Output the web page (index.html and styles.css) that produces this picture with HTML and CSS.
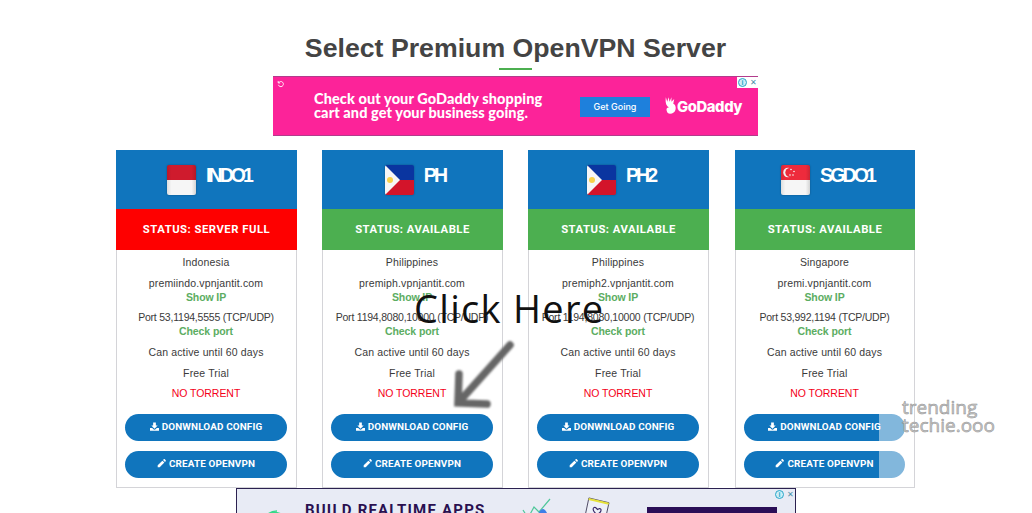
FILE: index.html
```html
<!DOCTYPE html>
<html lang="en">
<head>
<meta charset="utf-8">
<title>Select Premium OpenVPN Server</title>
<link rel="stylesheet" href="styles.css">
</head>
<body>
<svg class="defs" width="0" height="0" aria-hidden="true">
  <symbol id="i-down" viewBox="0 0 12 12"><path d="M4.2 0.5h3.6v4.2h2.4L6 9 1.800 4.700h2.400z"/><path d="M0.300 8h2.700l1.600 1.700c.8.800 2 .8 2.800 0L9 8h2.700c.2 0 .3.100.3.300v3.200c0 .2-.1.300-.3.300H.3c-.2 0-.3-.1-.3-.3V8.300C0 8.100.1 8 .3 8z"/></symbol>
  <symbol id="i-pen" viewBox="0 0 12 12"><path d="M7.200 2.200l2.600 2.600L3.600 11H.9V8.400z"/><path d="M8 1.400l1-1c.4-.4 1-.4 1.400 0l1.200 1.200c.4.400.4 1 0 1.400l-1 1z"/></symbol>
  <linearGradient id="shine" x1="0" y1="0" x2="1" y2="0"><stop offset="0" stop-color="#000" stop-opacity=".1"/><stop offset=".15" stop-color="#000" stop-opacity="0"/><stop offset=".85" stop-color="#000" stop-opacity="0"/><stop offset="1" stop-color="#000" stop-opacity=".14"/></linearGradient>
  <symbol id="f-id" viewBox="0 0 29 30"><rect width="29" height="15" fill="#cf1b2d"/><rect y="15" width="29" height="15" fill="#f6f6f6"/><rect width="29" height="30" fill="url(#shine)"/></symbol>
  <symbol id="f-ph" viewBox="0 0 29 30"><rect width="29" height="15" fill="#0a35a0"/><rect y="15" width="29" height="15" fill="#d3142a"/><path d="M0 0l15 15L0 30z" fill="#f6f6f6"/><circle cx="5" cy="15" r="3" fill="#f7d14a"/></symbol>
  <symbol id="f-sg" viewBox="0 0 29 30"><rect width="29" height="15" fill="#ee2b3c"/><rect y="15" width="29" height="15" fill="#f6f6f6"/><circle cx="7" cy="7.500" r="4.800" fill="#f6f6f6"/><circle cx="8.800" cy="7.500" r="4.500" fill="#ee2b3c"/><circle cx="10" cy="4.500" r=".8" fill="#f6f6f6"/><circle cx="13" cy="6.500" r=".8" fill="#f6f6f6"/><circle cx="12" cy="10" r=".8" fill="#f6f6f6"/><circle cx="9" cy="10" r=".8" fill="#f6f6f6"/><rect width="29" height="30" fill="url(#shine)"/></symbol>
</svg>

<main class="page">
  <h1 class="title">Select Premium OpenVPN Server</h1>
  <div class="rule"></div>

  <aside class="ad-top">
    <svg class="ad-replay" viewBox="0 0 10 10"><path d="M2 3.500a3.200 3.200 0 1 1-.3 2.500M1.500 1.200v2.500H4" fill="none" stroke="#fff" stroke-width="1.100"/></svg>
    <div class="ad-badges">
      <span class="ad-badge ad-info">i</span><span class="ad-badge ad-x">✕</span>
    </div>
    <p class="ad-copy">Check out your GoDaddy shopping<br>cart and get your business going.</p>
    <span class="ad-cta">Get Going</span>
    <div class="ad-logo">
      <svg class="ad-logo-mark" viewBox="0 0 14 20"><path d="M2 1l1.500 5L5 1l1 5 2-5v5l3-3-1 5c2 1 3 3 2.500 6-.5 3-3 5-6 5-2 0-3-1-3.500-3C2 13 4 12 6 12 3 11 1 8 2 1z" fill="#fff"/></svg>
      <span>GoDaddy</span>
    </div>
  </aside>

  <section class="cards">
    <article class="card">
      <header class="card-head"><svg class="flag"><use href="#f-id"/></svg><h2>INDO1</h2></header>
      <div class="status status-full">STATUS: SERVER FULL</div>
      <div class="card-body">
        <p>Indonesia</p>
        <p class="host">premiindo.vpnjantit.com<br><a class="link">Show IP</a></p>
        <p><span class="port">Port 53,1194,5555 (TCP/UDP)</span><br><a class="link">Check port</a></p>
        <p>Can active until 60 days</p>
        <p>Free Trial</p>
        <p class="warn">NO TORRENT</p>
        <a class="btn"><svg class="ico"><use href="#i-down"/></svg>DONWNLOAD CONFIG</a>
        <a class="btn"><svg class="ico"><use href="#i-pen"/></svg>CREATE OPENVPN</a>
      </div>
    </article>
    <article class="card">
      <header class="card-head"><svg class="flag"><use href="#f-ph"/></svg><h2>PH</h2></header>
      <div class="status">STATUS: AVAILABLE</div>
      <div class="card-body">
        <p>Philippines</p>
        <p class="host">premiph.vpnjantit.com<br><a class="link">Show IP</a></p>
        <p><span class="port">Port 1194,8080,10000 (TCP/UDP)</span><br><a class="link">Check port</a></p>
        <p>Can active until 60 days</p>
        <p>Free Trial</p>
        <p class="warn">NO TORRENT</p>
        <a class="btn"><svg class="ico"><use href="#i-down"/></svg>DONWNLOAD CONFIG</a>
        <a class="btn"><svg class="ico"><use href="#i-pen"/></svg>CREATE OPENVPN</a>
      </div>
    </article>
    <article class="card">
      <header class="card-head"><svg class="flag"><use href="#f-ph"/></svg><h2>PH2</h2></header>
      <div class="status">STATUS: AVAILABLE</div>
      <div class="card-body">
        <p>Philippines</p>
        <p class="host">premiph2.vpnjantit.com<br><a class="link">Show IP</a></p>
        <p><span class="port">Port 1194,8080,10000 (TCP/UDP)</span><br><a class="link">Check port</a></p>
        <p>Can active until 60 days</p>
        <p>Free Trial</p>
        <p class="warn">NO TORRENT</p>
        <a class="btn"><svg class="ico"><use href="#i-down"/></svg>DONWNLOAD CONFIG</a>
        <a class="btn"><svg class="ico"><use href="#i-pen"/></svg>CREATE OPENVPN</a>
      </div>
    </article>
    <article class="card">
      <header class="card-head"><svg class="flag"><use href="#f-sg"/></svg><h2>SGDO1</h2></header>
      <div class="status">STATUS: AVAILABLE</div>
      <div class="card-body">
        <p>Singapore</p>
        <p class="host">premi.vpnjantit.com<br><a class="link">Show IP</a></p>
        <p><span class="port">Port 53,992,1194 (TCP/UDP)</span><br><a class="link">Check port</a></p>
        <p>Can active until 60 days</p>
        <p>Free Trial</p>
        <p class="warn">NO TORRENT</p>
        <a class="btn"><svg class="ico"><use href="#i-down"/></svg>DONWNLOAD CONFIG</a>
        <a class="btn"><svg class="ico"><use href="#i-pen"/></svg>CREATE OPENVPN</a>
      </div>
    </article>
  </section>

  <aside class="ad-bottom">
    <svg class="ad-b-stripes" viewBox="0 0 24 14"><path d="M1 12C6 6 12 4 20 7M4 14C9 9 14 8 22 11M6 8C9 5 12 4 16 4" fill="none" stroke="#35d98a" stroke-width="1.600"/></svg>
    <span class="ad-b-text">BUILD REALTIME APPS</span>
    <svg class="ad-b-chart" viewBox="0 0 34 24"><path d="M1 14l5 8 6-11 5 5 11-13" fill="none" stroke="#4fc79a" stroke-width="1.200"/><path d="M14 24c2-8 5-11 7-11s5 4 6 11z" fill="#3d7fe8"/></svg>
    <svg class="ad-b-note" viewBox="0 0 26 24"><path d="M4 1l21 5-4 18L0 20z" fill="#eef0f8" stroke="#4a4560"/><path d="M4 1l21 5-.5 2L3.500 3z" fill="#e6e13a"/><path d="M12 18c-6-5-3-8-1-7l2 2 2-1c3 0 2 5-3 6z" fill="none" stroke="#3a2a6a" stroke-width="1.200"/></svg>
    <div class="ad-b-cta"></div>
    <div class="ad-badges ad-b-badges">
      <span class="ad-badge ad-info">i</span><span class="ad-badge ad-x">✕</span>
    </div>
  </aside>

  <div class="veil"></div>
  <div class="callout">Click Here</div>
  <svg class="arrow" viewBox="0 0 70 75"><path d="M60 5L9 62M9 34l-1 29 29 1" fill="none" stroke="#666" stroke-width="7.500" stroke-linecap="round"/></svg>
  <div class="mark">trending<br>techie.ooo</div>
</main>
</body>
</html>
```
FILE: styles.css
```css
html, body { margin: 0; height: 513px; overflow: hidden; background: #fff; }
body { font-family: "Liberation Sans", Arial, sans-serif; color: #444; }
.defs { position: absolute; }
.page { position: relative; width: 1031px; height: 513px; display: flex; flex-direction: column; align-items: center; }

.title { margin: 33px 0 0 0; font-size: 26.700px; line-height: 30px; font-weight: 700; color: #444; }
.rule { width: 33px; height: 2px; margin-top: 5px; background: #4caf50; }

.ad-top { position: relative; box-sizing: border-box; width: 485px; height: 60px; margin-top: 6px; background: #fc2399; border: 1px solid #b23c8c; border-width: 1px 0 1px 0; display: flex; align-items: center; color: #fff; }
.ad-replay { position: absolute; left: 4px; top: 3px; width: 8px; height: 8px; }
.ad-badges { position: absolute; right: 0; top: 0; display: flex; background: #fff; }
.ad-badge { width: 10px; height: 11px; display: flex; align-items: center; justify-content: center; font-size: 8px; line-height: 10px; }
.ad-info { width: 9px; height: 9px; margin: 1px; border: 1px solid #2aa6c9; border-radius: 50%; box-sizing: border-box; color: #2aa6c9; background: #cdeef7; font-size: 7px; font-weight: 700; }
.ad-x { color: #4a90a8; }
.ad-copy { margin: 0 0 0 41px; width: 266px; font-family: Lato, sans-serif; font-weight: 900; font-size: 14.500px; line-height: 14.500px; letter-spacing: 0.1px; white-space: nowrap; }
.ad-cta { width: 70px; height: 20px; margin-top: 1px; background: #1e80dc; display: flex; align-items: center; justify-content: center; font-family: Inter, sans-serif; font-size: 9px; font-weight: 500; }
.ad-logo { display: flex; align-items: center; margin-left: 14px; margin-top: 2px; font-family: Inter, sans-serif; font-weight: 800; font-size: 14.800px; letter-spacing: -0.4px; }
.ad-logo-mark { width: 13px; height: 19px; margin-top: -4px; }

.cards { display: grid; grid-template-columns: repeat(4, 181px); column-gap: 25px; margin-top: 14px; }
.card { box-sizing: border-box; height: 338px; border: 1px solid #d4d4d8; border-top: 0; }
.card:last-child { margin-left: 1px; }
.card-head { height: 59px; margin: 0 -1px; padding-left: 5px; box-sizing: border-box; background: #1075bd; display: flex; align-items: center; justify-content: center; gap: 10px; }
.flag { width: 29px; height: 30px; border-radius: 2px; box-shadow: 0 0 2px rgba(0, 0, 0, .35); }
.card-head h2 { margin: -10px 0 0 0; font-size: 19.500px; line-height: 24px; font-weight: 700; letter-spacing: -2.900px; color: #fff; }
.status { height: 40px; padding-bottom: 1px; margin: 0 -1px; background: #4caf50; color: #fff; font-family: Roboto, sans-serif; font-weight: 700; font-size: 11.300px; letter-spacing: 0.5px; display: flex; align-items: center; justify-content: center; }
.status-full { background: #fe0000; }
.card-body { padding: 5px 9px 0 8px; text-align: center; font-size: 10.500px; line-height: 14px; letter-spacing: 0.15px; color: #3a3a3a; display: flex; flex-direction: column; }
.card-body p { margin: 0 -6px 7px; white-space: nowrap; }
.card-body .host { margin-bottom: 6px; }
.port { letter-spacing: -0.22px; }
.card-body .warn { margin: -1px 0 14px; color: #f40018; letter-spacing: -0.05px; }
.link { color: #5cad62; font-weight: 700; letter-spacing: -0.1px; }
.btn { height: 27px; padding-bottom: 2px; box-sizing: border-box; margin-bottom: 10px; border-radius: 14px; background: #1075bd; color: #fff; font-family: Roboto, sans-serif; font-weight: 700; font-size: 9.900px; display: flex; align-items: center; justify-content: center; gap: 3px; white-space: nowrap; }
.ico { width: 9px; height: 9px; fill: #fff; }

.ad-bottom { position: relative; box-sizing: border-box; width: 560px; height: 25px; flex: none; margin-left: 1px; background: #e8ebf5; border: 1px solid #2b2150; border-width: 1px 1px 0 1px; overflow: hidden; }
.ad-b-stripes { position: absolute; left: 24px; top: 18px; width: 24px; height: 14px; }
.ad-b-text { position: absolute; left: 68px; top: 12px; font-family: Roboto, sans-serif; font-weight: 700; font-size: 15px; line-height: 18px; letter-spacing: 1.200px; color: #2a1050; white-space: nowrap; }
.ad-b-chart { position: absolute; left: 285px; top: 7px; width: 34px; height: 24px; }
.ad-b-note { position: absolute; left: 348px; top: 8px; width: 25px; height: 23px; }
.ad-b-cta { position: absolute; left: 410px; top: 18px; width: 130px; height: 20px; background: #2a0e57; }
.ad-b-badges { background: transparent; }

.veil { position: absolute; left: 879px; top: 410px; width: 28px; height: 72px; background: rgba(255, 255, 255, .48); }
.callout { position: absolute; left: 414px; top: 285px; font-family: "Open Sans", sans-serif; font-size: 38px; line-height: 46px; letter-spacing: 1.300px; color: #111; white-space: nowrap; }
.arrow { position: absolute; left: 450px; top: 340px; width: 70px; height: 75px; filter: blur(1.300px); }
.mark { position: absolute; left: 902px; top: 398px; font-family: "Open Sans", sans-serif; font-size: 19px; line-height: 18px; color: #c8c8c8; -webkit-text-stroke: 0.5px #8f8f8f; white-space: nowrap; }
```
